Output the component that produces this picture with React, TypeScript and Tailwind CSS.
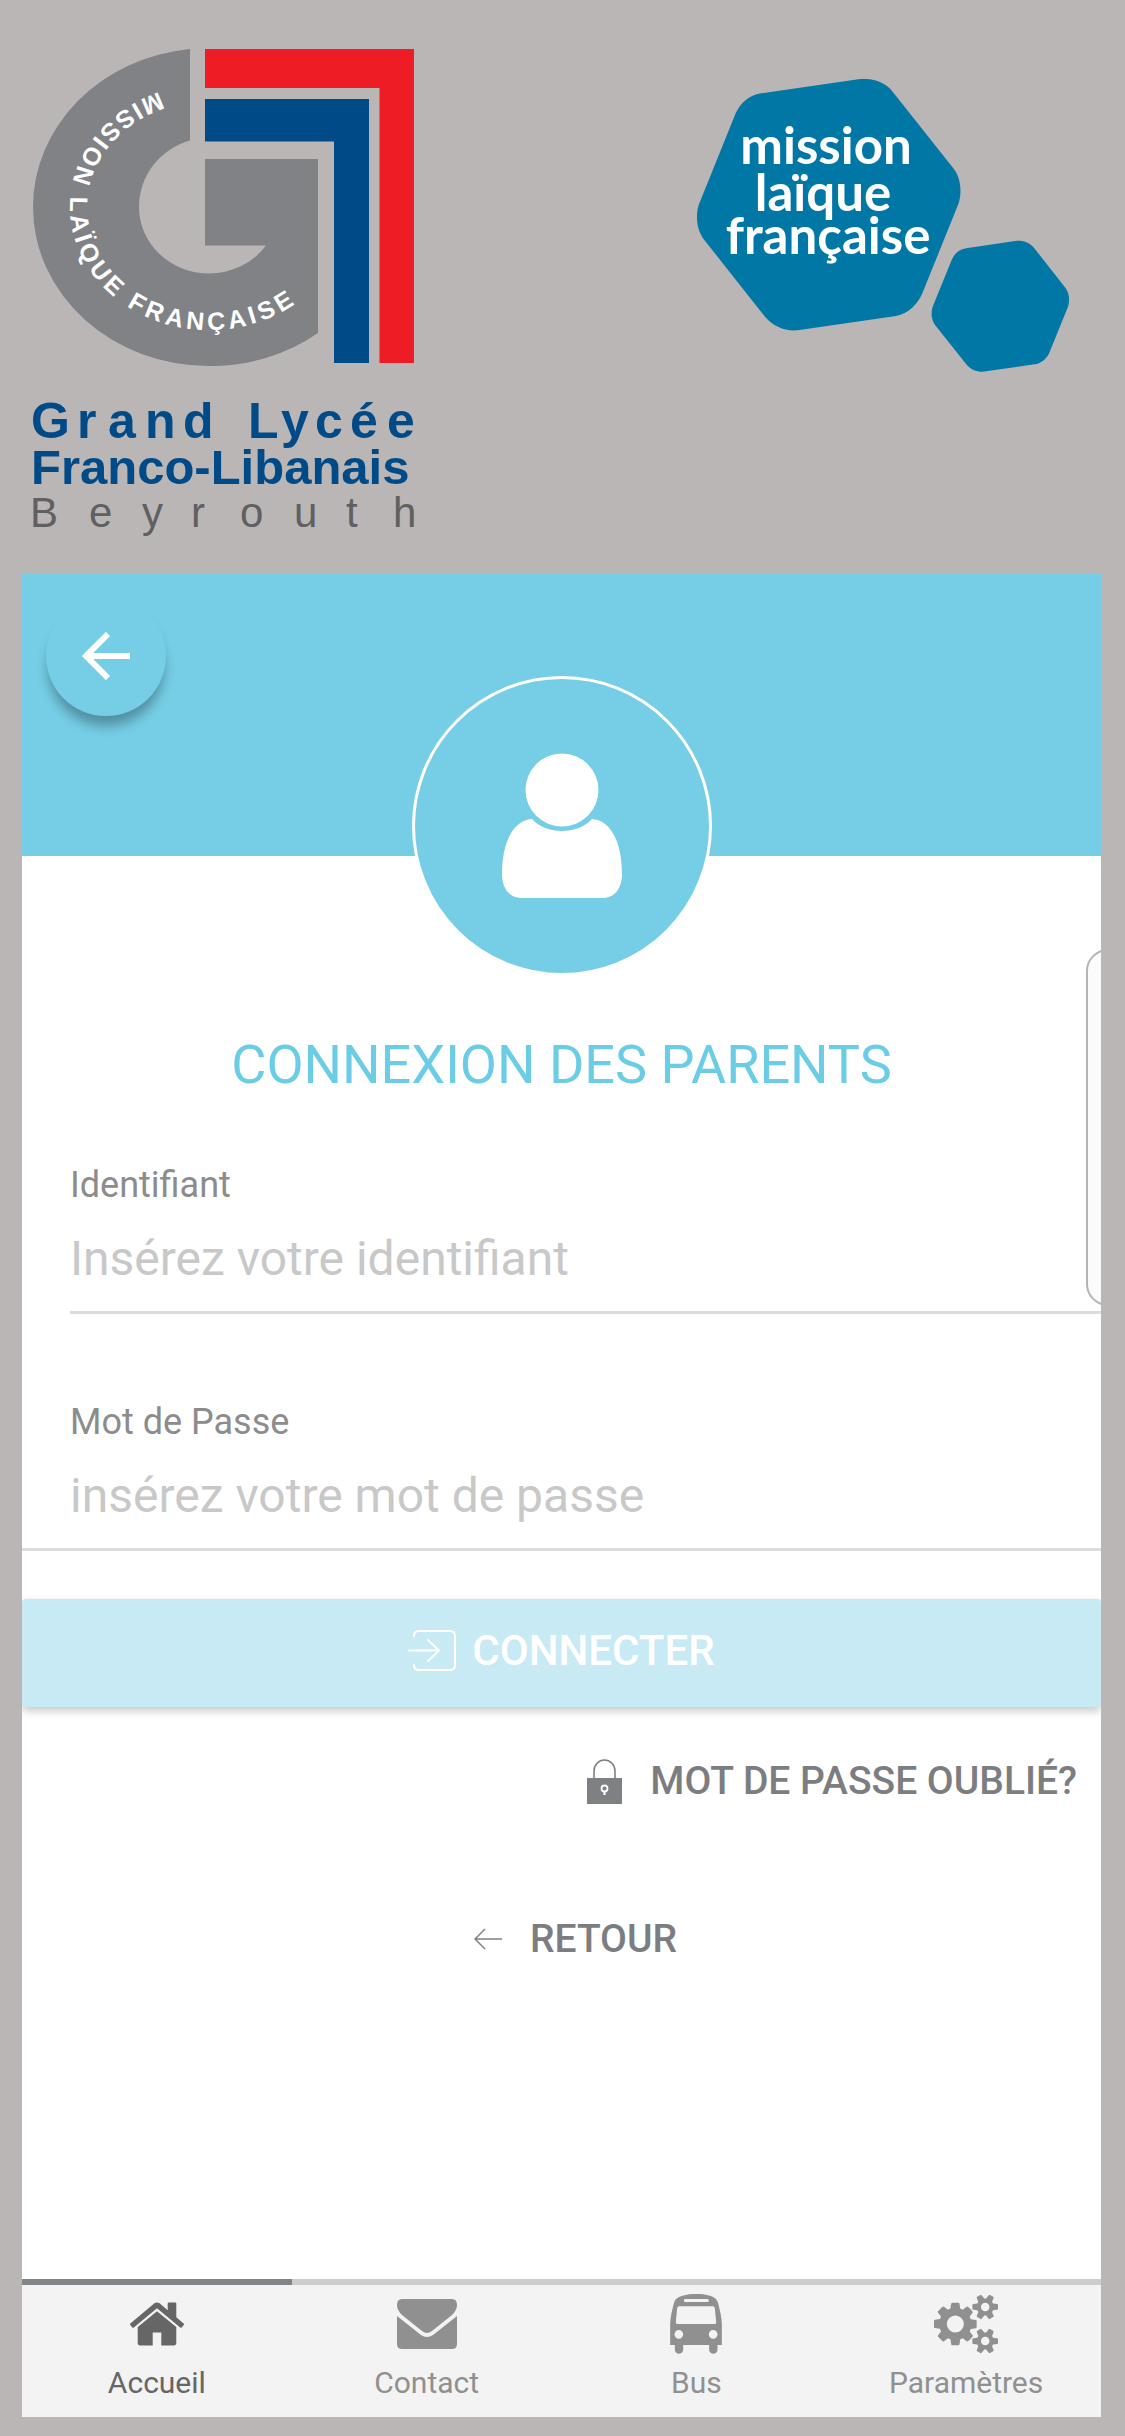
import type { ReactNode } from 'react';

function SchoolLogo() {
  return (
    <svg
      viewBox="33 49 382 490"
      role="img"
      aria-label="Grand Lycée Franco-Libanais Beyrouth"
      className="h-[490px] w-[382px] shrink-0 overflow-visible"
    >
      <path
        d="M190 49A176 159 0 0 0 33 207A176 159 0 0 0 209 366A176 159 0 0 0 318 333V159H205V245.500H266A70 66 0 0 1 209 273.500A70 66.500 0 0 1 139 207A70 69 0 0 1 190 140.500Z"
        fill="#808285"
      />
      <path d="M205 49H414V363H379.500V88H205Z" fill="#ee1c25" />
      <path d="M205 99H369V363H334V141.500H205Z" fill="#004b87" />
      <path id="motto-arc" d="M159 92A139 123 0 0 0 70 207A139 123 0 0 0 209 330A139 123 0 0 0 330 268" fill="none" />
      <text
        fontFamily="Liberation Sans, Arial, sans-serif"
        fontWeight="700"
        fontSize="25"
        fill="#ffffff"
        dx="0 4 4 4 4 4 4 4 4 4 4 4 4 4 4 4 4 4 4 4 4 4 4 4"
      >
        <textPath href="#motto-arc">MISSION LAÏQUE FRANÇAISE</textPath>
      </text>
      <g fontFamily="Liberation Sans, Arial, sans-serif">
        <text x="31 77 108 145 183 225 248 281 315 350 387" y="438" fontSize="50" fontWeight="700" fill="#004b87">
          Grand Lycée
        </text>
        <text x="31" y="484" fontSize="49" fontWeight="700" fill="#004b87">
          Franco-Libanais
        </text>
        <text x="30 89 142 191 240 294 346 393" y="527" fontSize="42" fill="#5f6062">
          Beyrouth
        </text>
      </g>
    </svg>
  );
}

function MissionLogo() {
  return (
    <svg
      viewBox="0 0 373 294"
      role="img"
      aria-label="mission laïque française"
      className="mt-[30px] h-[294px] w-[373px] shrink-0"
    >
      <g transform="translate(-26 -29) scale(0.33333)" fill="#0077a4">
        <path d="M275 130L565 88C605 83 645 95 668 125L850 355C873 385 876 425 866 460L757 730C742 765 715 790 678 798L388 840C350 846 310 830 285 800L103 570C80 540 76 500 86 465L197 190C212 158 240 134 275 130Z" />
        <path d="M888 595L1035 573C1058 570 1080 577 1094 596L1186 713C1198 730 1200 750 1194 770L1138 908C1130 926 1114 940 1094 943L948 964C926 968 904 960 890 944L797 827C784 811 782 790 788 770L845 630C853 611 868 598 888 595Z" />
      </g>
      <g fontFamily="Lato, sans-serif" fontWeight="700" fontSize="51" fill="#ffffff" textAnchor="middle">
        <text x="130" y="85">mission</text>
        <text x="127" y="132">laïque</text>
        <text x="132" y="175">française</text>
      </g>
    </svg>
  );
}

function BackArrow() {
  return (
    <svg viewBox="0 0 48 48" className="size-12" fill="none" stroke="#ffffff" strokeWidth="6" aria-hidden="true">
      <path d="M48 24H6M26 2L4 24L26 46" />
    </svg>
  );
}

function PersonIcon() {
  return (
    <svg viewBox="0 0 120 146" className="h-[146px] w-[120px]" fill="#ffffff" aria-hidden="true">
      <circle cx="60" cy="37" r="36.500" />
      <path d="M30 66C44 82 76 82 90 66C108 67 120 88 120 121C120 136 112 145 101 145H19C8 145 0 136 0 121C0 88 12 67 30 66Z" />
    </svg>
  );
}

function EnterIcon() {
  return (
    <svg
      viewBox="0 0 48 42"
      className="h-[42px] w-12"
      fill="none"
      stroke="#ffffff"
      strokeWidth="2"
      strokeLinecap="round"
      aria-hidden="true"
    >
      <path d="M6 6Q6 1 11 1H42Q47 1 47 6V35Q47 40 42 40H11Q6 40 6 35" />
      <path d="M1 20.500H31M20 10L31 20.500L20 31" />
    </svg>
  );
}

function LockIcon() {
  return (
    <svg viewBox="0 0 35 45" className="h-[45px] w-[35px]" aria-hidden="true">
      <path d="M7 20V12A10.500 11 0 0 1 28 12V20" fill="none" stroke="#7f8084" strokeWidth="1.600" />
      <rect y="19" width="35" height="26" fill="#7f8084" />
      <circle cx="17.500" cy="29.500" r="3" fill="none" stroke="#ffffff" strokeWidth="1.800" />
      <path d="M17.500 32V36" stroke="#ffffff" strokeWidth="2.200" />
    </svg>
  );
}

function ThinArrow() {
  return (
    <svg viewBox="0 0 28 22" className="h-[22px] w-7" fill="none" stroke="#7f8084" strokeWidth="1.500" aria-hidden="true">
      <path d="M28 11H1M11 1L1 11L11 21" />
    </svg>
  );
}

function HomeIcon() {
  return (
    <svg viewBox="0 0 1792 1792" className="size-[60px]" fill="currentColor" aria-hidden="true">
      <path d="M1472 992v480q0 26-19 45t-45 19h-384v-384h-256v384h-384q-26 0-45-19t-19-45v-480q0-1 .5-3t.5-3l575-474 575 474q1 2 1 6zm223-69l-62 74q-8 9-21 11h-3q-13 0-21-7l-692-577-692 577q-12 8-24 7-13-2-21-11l-62-74q-8-10-7-23.500t11-21.500l719-599q32-26 76-26t76 26l244 204v-195q0-14 9-23t23-9h192q14 0 23 9t9 23v408l219 182q10 8 11 21.500t-7 23.500z" />
    </svg>
  );
}

function EnvelopeIcon() {
  return (
    <svg viewBox="0 0 60 50" className="h-[50px] w-[60px]" fill="currentColor" aria-hidden="true">
      <path d="M5 0H55Q60 0 60 6Q60 11 55 16L35 32Q30 36 25 32L5 16Q0 11 0 6Q0 0 5 0Z" />
      <path d="M0 17L24 36Q30 40 36 36L60 17V45Q60 50 55 50H5Q0 50 0 45Z" />
    </svg>
  );
}

function BusIcon() {
  return (
    <svg viewBox="0 0 155 180" className="h-[60px] w-[52px]" fill="currentColor" aria-hidden="true">
      <path
        fillRule="evenodd"
        d="M0 153V90C0 70 7 45 12 25C18 5 50 0 78 0S138 5 143 25C148 45 155 70 155 90V153H142V167A12.500 12.500 0 0 1 117 167V153H39V167A12.500 12.500 0 0 1 14 167V153ZM45 15Q41 15 41 19.500T45 24H112Q116 24 116 19.500T112 15ZM27 37Q22 37 21 42L17 84Q17 90 22 90H134Q139 90 138 84L134 42Q133 37 128 37ZM26 108A13 13 0 1 0 26 134A13 13 0 1 0 26 108ZM129 108A13 13 0 1 0 129 134A13 13 0 1 0 129 108Z"
      />
    </svg>
  );
}

function CogsIcon() {
  return (
    <svg viewBox="0 0 1920 1792" className="h-[60px] w-16" fill="currentColor" aria-hidden="true">
      <path d="M896 896q0-106-75-181t-181-75-181 75-75 181 75 181 181 75 181-75 75-181zm768 512q0-52-38-90t-90-38-90 38-38 90q0 53 37.500 90.500t90.500 37.500 90.500-37.500 37.500-90.500zm0-1024q0-52-38-90t-90-38-90 38-38 90q0 53 37.500 90.500t90.500 37.500 90.500-37.500 37.500-90.500zm-384 421v185q0 10-7 19.500t-16 10.500l-155 24q-11 35-32 76 34 48 90 115 7 11 7 20 0 12-7 19-23 30-82.500 89.500t-78.500 59.500q-11 0-21-7l-115-90q-37 19-77 31-11 108-23 155-7 24-30 24h-186q-11 0-20-7.500t-10-17.500l-23-153q-34-10-75-31l-118 89q-7 7-20 7-11 0-21-8-144-133-144-160 0-9 7-19 10-14 41-53t47-61q-23-44-35-82l-152-24q-10-1-17-9.500t-7-19.500v-185q0-10 7-19.500t16-10.500l155-24q11-35 32-76-34-48-90-115-7-11-7-20 0-12 7-20 22-30 82-89t79-59q11 0 21 7l115 90q34-18 77-32 11-108 23-154 7-24 30-24h186q11 0 20 7.500t10 17.500l23 153q34 10 75 31l118-89q8-7 20-7 11 0 21 8 144 133 144 160 0 8-7 19-12 16-42 54t-45 60q23 48 34 82l152 23q10 2 17 10.500t7 19.500zm640 533v140q0 16-149 31-12 27-30 52 51 113 51 138 0 4-4 7-122 71-124 71-8 0-46-47t-52-68q-20 2-30 2t-30-2q-14 21-52 68t-46 47q-2 0-124-71-4-3-4-7 0-25 51-138-18-25-30-52-149-15-149-31v-140q0-16 149-31 13-29 30-52-51-113-51-138 0-4 4-7 4-2 35-20t59-34 30-16q8 0 46 46.500t52 67.500q20-2 30-2t30 2q51-71 92-112l6-2q4 0 124 70 4 3 4 7 0 25-51 138 17 23 30 52 149 15 149 31zm0-1024v140q0 16-149 31-12 27-30 52 51 113 51 138 0 4-4 7-122 71-124 71-8 0-46-47t-52-68q-20 2-30 2t-30-2q-14 21-52 68t-46 47q-2 0-124-71-4-3-4-7 0-25 51-138-18-25-30-52-149-15-149-31v-140q0-16 149-31 13-29 30-52-51-113-51-138 0-4 4-7 4-2 35-20t59-34 30-16q8 0 46 46.500t52 67.500q20-2 30-2t30 2q51-71 92-112l6-2q4 0 124 70 4 3 4 7 0 25-51 138 17 23 30 52 149 15 149 31z" />
    </svg>
  );
}

function Tab({ label, active = false, children }: { label: string; active?: boolean; children: ReactNode }) {
  return (
    <a
      href="#"
      aria-current={active ? 'page' : undefined}
      className={
        active
          ? 'flex flex-1 flex-col items-center border-t-[6px] border-[#828587] pt-[9px] pb-4 text-[#666666]'
          : 'flex flex-1 flex-col items-center border-t-[6px] border-[#cdcdcd] pt-[9px] pb-4 text-[#909090]'
      }
    >
      <span className="flex h-[60px] items-center">{children}</span>
      <span className="mt-[11px] text-[30px] leading-9">{label}</span>
    </a>
  );
}

export default function App() {
  return (
    <div className="flex min-h-screen flex-col bg-[#bab6b5] pr-6 pb-[19px] pl-[22px] font-['Roboto',sans-serif]">
      <header className="flex items-start justify-between pt-[49px] pr-8 pb-[35px] pl-[11px]">
        <SchoolLogo />
        <MissionLogo />
      </header>

      <main className="relative flex flex-1 flex-col overflow-hidden bg-white">
        <div className="h-[282px] bg-[#75cee6] pt-[22px] pl-6">
          <button
            type="button"
            aria-label="Précédent"
            className="flex size-[120px] items-center justify-center rounded-full bg-[#75cee6] shadow-[0_12px_12px_-2px_rgba(0,0,0,0.3)]"
          >
            <BackArrow />
          </button>
        </div>
        <div className="relative -mt-[180px] flex size-[300px] items-center justify-center self-center rounded-full border-[3px] border-white bg-[#75cee6]">
          <PersonIcon />
        </div>

        <div
          aria-hidden="true"
          className="absolute top-[375px] -right-10 h-[357px] w-[55px] rounded-[22px] border-2 border-[#b4b4b4] bg-[#fbfbfb]"
        />

        <h1 className="mt-[57px] text-center text-[54px] leading-[64px] text-[#6bcce6]">CONNEXION DES PARENTS</h1>

        <form className="mt-[68px] flex flex-col">
          <div className="flex flex-col pl-12">
            <label htmlFor="login" className="text-[36px] leading-10 text-[#8c8c8c]">
              Identifiant
            </label>
            <input
              id="login"
              type="text"
              placeholder="Insérez votre identifiant"
              className="h-[109px] w-full border-b-[3px] border-[#dcdcdc] bg-transparent text-[48px] text-[#666666] outline-none placeholder:text-[#c8c8c8]"
            />
          </div>
          <div className="mt-[88px] flex flex-col">
            <label htmlFor="password" className="pl-12 text-[36px] leading-10 text-[#8c8c8c]">
              Mot de Passe
            </label>
            <input
              id="password"
              type="password"
              placeholder="insérez votre mot de passe"
              className="h-[109px] w-full border-b-[3px] border-[#dcdcdc] bg-transparent pl-12 text-[48px] text-[#666666] outline-none placeholder:text-[#c8c8c8]"
            />
          </div>
          <button
            type="submit"
            className="mt-12 flex h-[108px] items-center justify-center gap-4 rounded-[4px] bg-[#c8eaf4] pb-1 text-[42px] leading-[48px] font-medium text-white shadow-[0_4px_8px_rgba(0,0,0,0.22)]"
          >
            <EnterIcon />
            CONNECTER
          </button>
        </form>

        <a
          href="#"
          className="mt-[50px] flex items-center gap-7 self-end pr-6 text-[39px] leading-[48px] font-medium text-[#7c7d81]"
        >
          <LockIcon />
          MOT DE PASSE OUBLIÉ?
        </a>
        <a
          href="#"
          className="mt-[110px] flex items-center gap-7 self-center pl-7 text-[39px] leading-[48px] font-medium text-[#7c7d81]"
        >
          <ThinArrow />
          RETOUR
        </a>

        <nav className="mt-auto flex bg-[#f3f3f3]">
          <Tab label="Accueil" active>
            <HomeIcon />
          </Tab>
          <Tab label="Contact">
            <EnvelopeIcon />
          </Tab>
          <Tab label="Bus">
            <BusIcon />
          </Tab>
          <Tab label="Paramètres">
            <CogsIcon />
          </Tab>
        </nav>
      </main>
    </div>
  );
}
